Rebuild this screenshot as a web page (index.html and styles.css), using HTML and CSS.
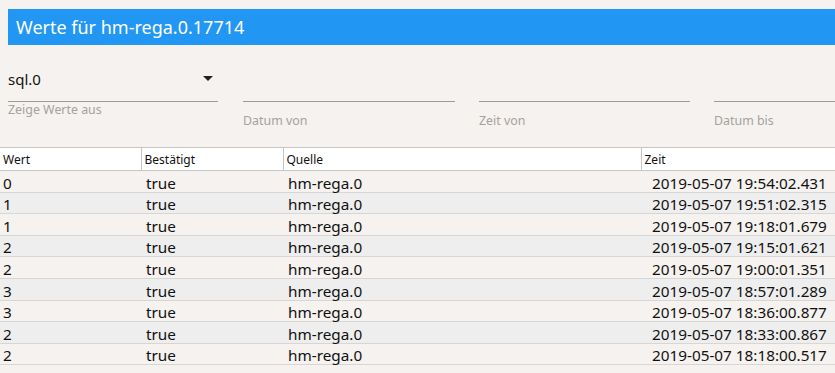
FILE: index.html
```html
<!DOCTYPE html>
<html>
<head>
<meta charset="utf-8">
<link rel="stylesheet" href="styles.css">
</head>
<body>
<div class="title">Werte für hm-rega.0.17714</div>
<div class="form">
  <div class="field field-select">
    <div class="input"><span>sql.0</span><span class="arrow"></span></div>
    <div class="label label-select">Zeige Werte aus</div>
  </div>
  <div class="field">
    <div class="input"></div>
    <div class="label">Datum von</div>
  </div>
  <div class="field field-third">
    <div class="input"></div>
    <div class="label">Zeit von</div>
  </div>
  <div class="field field-last">
    <div class="input"></div>
    <div class="label">Datum bis</div>
  </div>
</div>
<table class="grid">
  <colgroup><col class="c1"><col class="c2"><col class="c3"><col class="c4"></colgroup>
  <thead>
    <tr><th>Wert</th><th>Bestätigt</th><th>Quelle</th><th>Zeit</th></tr>
  </thead>
  <tbody>
    <tr><td>0</td><td>true</td><td>hm-rega.0</td><td class="ts">2019-05-07 19:54:02.431</td></tr>
    <tr><td>1</td><td>true</td><td>hm-rega.0</td><td class="ts">2019-05-07 19:51:02.315</td></tr>
    <tr><td>1</td><td>true</td><td>hm-rega.0</td><td class="ts">2019-05-07 19:18:01.679</td></tr>
    <tr><td>2</td><td>true</td><td>hm-rega.0</td><td class="ts">2019-05-07 19:15:01.621</td></tr>
    <tr><td>2</td><td>true</td><td>hm-rega.0</td><td class="ts">2019-05-07 19:00:01.351</td></tr>
    <tr><td>3</td><td>true</td><td>hm-rega.0</td><td class="ts">2019-05-07 18:57:01.289</td></tr>
    <tr><td>3</td><td>true</td><td>hm-rega.0</td><td class="ts">2019-05-07 18:36:00.877</td></tr>
    <tr><td>2</td><td>true</td><td>hm-rega.0</td><td class="ts">2019-05-07 18:33:00.867</td></tr>
    <tr><td>2</td><td>true</td><td>hm-rega.0</td><td class="ts">2019-05-07 18:18:00.517</td></tr>
  </tbody>
</table>
</body>
</html>
```
FILE: styles.css
```css
html, body {
  margin: 0;
  padding: 0;
  background: #f5f2ef;
  font-family: "Noto Sans", "Open Sans", sans-serif;
  overflow: hidden;
}
.title {
  margin: 9px 0 0 8px;
  height: 36px;
  line-height: 37px;
  background: #2196f3;
  color: #fff;
  font-size: 18px;
  padding-left: 8px;
}
.form {
  display: flex;
  gap: 24px;
  padding-left: 8px;
  margin-top: 21px;
  height: 81px;
}
.field {
  width: 212px;
  flex: none;
}
.field-select { width: 210px; margin-right: 1px; }
.field-third { width: 211px; }
.field-last { width: 140px; }
.input {
  height: 36px;
  border-bottom: 1px solid #9e9a98;
  display: flex;
  align-items: center;
  justify-content: space-between;
  font-size: 15px;
  color: #111;
  box-sizing: border-box;
  padding-bottom: 10px;
}
.arrow {
  width: 0;
  height: 0;
  border-left: 5px solid transparent;
  border-right: 5px solid transparent;
  border-top: 5px solid #222;
  margin-right: 5px;
}
.label {
  font-size: 12.4px;
  color: #a5a29f;
  margin-top: 10px;
}
.label-select { margin-top: -1px; }
.grid {
  width: 835px;
  border-collapse: collapse;
  table-layout: fixed;
  font-size: 15.3px;
  color: #111;
}
.c1 { width: 141px; }
.c2 { width: 142px; }
.c3 { width: 358px; }
.c4 { width: 194px; }
.grid th {
  background: #fff;
  font-weight: normal;
  font-size: 12px;
  text-align: left;
  height: 22px;
  padding: 0 0 0 3px;
  border: 1px solid #c8c6c4;
  border-left: 1px solid #d6d4d2;
}
.grid th:first-child { border-left: none; }
.grid td {
  height: 17px;
  padding: 3.6px 0 0 5px;
  border-bottom: 1px solid #d8d6d4;
  line-height: 17px;
  white-space: nowrap;
}
.grid td:first-child { padding-left: 3px; }
.grid td.ts { padding-left: 11px; }
.grid tbody tr:nth-child(even) td { background: #eeeeee; }
```
